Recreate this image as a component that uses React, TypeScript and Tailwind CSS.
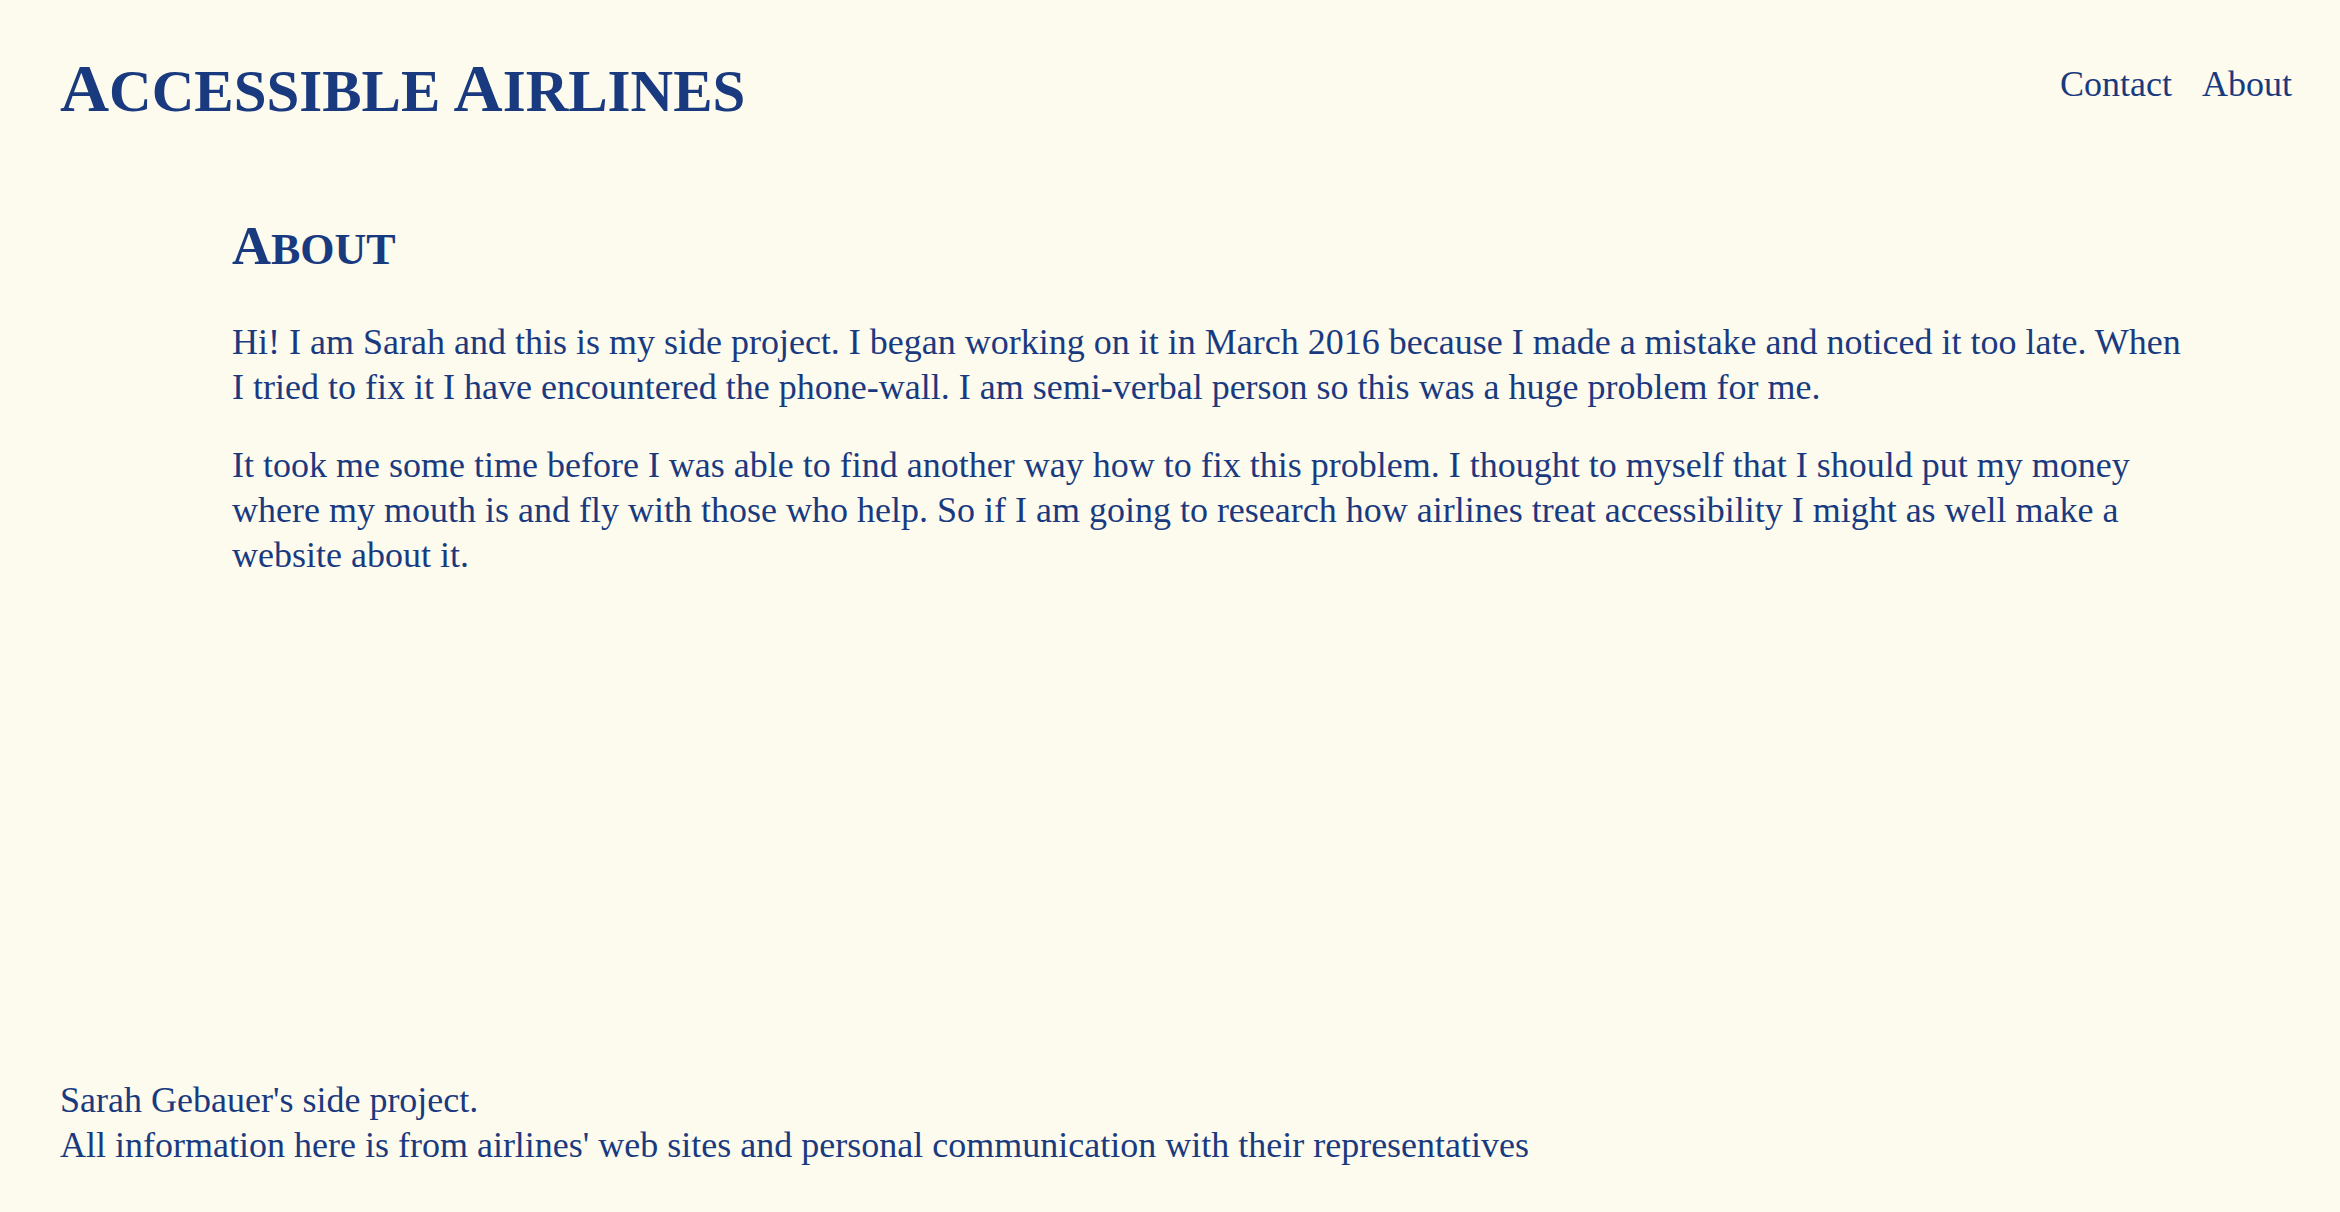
const serif = 'font-["Liberation_Serif","Times_New_Roman",serif]'

function SmallCaps({ text, big, small }: { text: string; big: string; small: string }) {
  // fake small caps: first letter of each word full size, rest uppercase smaller
  return (
    <>
      {text.split(' ').map((word, i) => (
        <span key={i}>
          {i > 0 && ' '}
          <span className={big}>{word[0]}</span>
          <span className={small}>{word.slice(1).toUpperCase()}</span>
        </span>
      ))}
    </>
  )
}

export default function App() {
  return (
    <div className={`${serif} flex h-[1212px] flex-col bg-[#fdfbee] text-[#1a3a80]`}>
      <header className="flex items-start justify-between pr-[48px] pl-[60px] pt-[48px]">
        <h1 className="text-[68px] leading-[80px] font-bold">
          <SmallCaps text="Accessible Airlines" big="text-[68px]" small="text-[59px]" />
        </h1>
        <nav className="flex gap-[30px] pt-[14px] text-[36px] leading-[45px]">
          <a href="#">Contact</a>
          <a href="#">About</a>
        </nav>
      </header>

      <main className="flex-1 pr-[146px] pl-[232px] pt-[85px]">
        <h2 className="mb-[40px] text-[54px] leading-[60px] font-bold">
          <SmallCaps text="About" big="text-[54px]" small="text-[44px]" />
        </h2>
        <p className="mb-[33px] text-[36px] leading-[45px]">
          Hi! I am Sarah and this is my side project. I began working on it in March 2016 because I made a mistake and
          noticed it too late. When I tried to fix it I have encountered the phone-wall. I am semi-verbal person so this
          was a huge problem for me.
        </p>
        <p className="text-[36px] leading-[45px]">
          It took me some time before I was able to find another way how to fix this problem. I thought to myself that I
          should put my money where my mouth is and fly with those who help. So if I am going to research how airlines
          treat accessibility I might as well make a website about it.
        </p>
      </main>

      <footer className="px-[60px] pb-[44px] text-[36px] leading-[45px]">
        <p>Sarah Gebauer's side project.</p>
        <p>All information here is from airlines' web sites and personal communication with their representatives</p>
      </footer>
    </div>
  )
}
